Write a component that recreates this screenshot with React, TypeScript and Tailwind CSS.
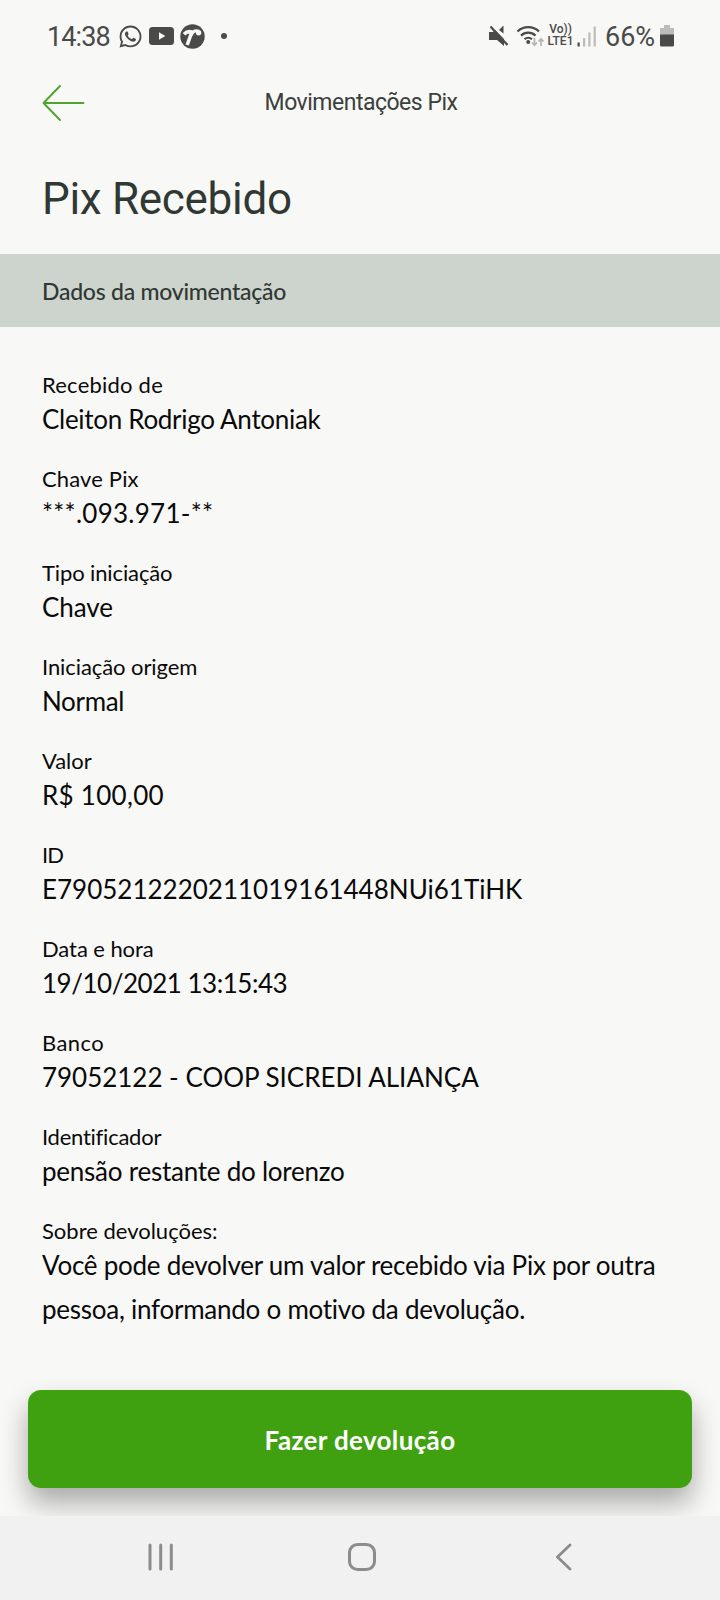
import { FaWhatsapp } from 'react-icons/fa6';

interface Field {
  label: string;
  value: string;
  labelClass?: string;
  valueClass?: string;
}

const fields: Field[] = [
  { label: 'Recebido de', value: 'Cleiton Rodrigo Antoniak', labelClass: 'tracking-[0.22px]', valueClass: 'tracking-[-0.3px]' },
  { label: 'Chave Pix', value: '***.093.971-**', labelClass: 'tracking-[0.15px]', valueClass: 'tracking-[0.26px]' },
  { label: 'Tipo iniciação', value: 'Chave', labelClass: 'tracking-[-0.12px]', valueClass: 'tracking-[-0.09px]' },
  { label: 'Iniciação origem', value: 'Normal', labelClass: 'tracking-[-0.08px]', valueClass: 'tracking-[-0.33px]' },
  { label: 'Valor', value: 'R$ 100,00', labelClass: 'tracking-[-0.05px]', valueClass: 'tracking-[0.28px]' },
  { label: 'ID', value: 'E7905212220211019161448NUi61TiHK', labelClass: 'tracking-[-1px]' },
  { label: 'Data e hora', value: '19/10/2021 13:15:43', labelClass: 'tracking-[-0.08px]', valueClass: 'tracking-[-0.48px]' },
  { label: 'Banco', value: '79052122 - COOP SICREDI ALIANÇA', labelClass: 'tracking-[0.4px]', valueClass: 'tracking-[-0.02px]' },
  { label: 'Identificador', value: 'pensão restante do lorenzo', labelClass: 'tracking-[-0.24px]', valueClass: 'tracking-[-0.24px]' },
];

function StatusBar() {
  return (
    <div className="flex h-[72px] items-center pl-[47px] pr-[46px] font-['Roboto',sans-serif] text-[#4a4a48]">
      <span className="w-[71px] pt-[2px] text-[27px] tracking-[-0.9px]">14:38</span>
      <FaWhatsapp className="size-[25px]" />
      <svg className="ml-[6px]" width="25" height="18" viewBox="0 0 25 18">
        <rect width="25" height="18" rx="3.5" fill="currentColor" />
        <path d="M10 5.2v7.6l6.3-3.8z" fill="#f8f8f6" />
      </svg>
      <svg className="ml-[6px]" width="25" height="25" viewBox="0 0 25 25" fill="none">
        <circle cx="12.5" cy="12.5" r="12.2" fill="currentColor" />
        <path d="M4 10.2Q7.5 6.6 11.8 8L7.2 21" stroke="#f8f8f6" strokeWidth="3.6" strokeLinejoin="round" />
        <path d="M11 11.5Q13.5 5.2 19 7.2" stroke="#f8f8f6" strokeWidth="3" />
        <circle cx="18.6" cy="8.8" r="2.7" fill="#f8f8f6" />
      </svg>
      <span className="ml-[16px] size-[6px] rounded-full bg-[#4a4a48]" />

      <svg className="ml-auto" width="20" height="22" viewBox="0 0 20 22">
        <path d="M0 7h4l2-2 9 9v7l-7-6H0z" fill="currentColor" />
        <path d="M14.5.5v8L10 5z" fill="currentColor" />
        <path d="M1.5 1.5l17 18.5" stroke="currentColor" strokeWidth="2.2" />
      </svg>
      <svg className="ml-[7px]" width="29" height="22" viewBox="0 0 29 22" fill="none">
        <path d="M1.5 6.5a15.5 15.5 0 0 1 21.5 0M5 10.6a10.5 10.5 0 0 1 14.5 0M8.5 14.2a5.6 5.6 0 0 1 7.5 0" stroke="currentColor" strokeWidth="2.2" />
        <circle cx="12.2" cy="17" r="2" fill="currentColor" />
        <path d="M18.5 13v7M16 17.5l2.5 2.8 2.5-2.8M25 21v-7M22.5 16.5l2.5-2.8 2.5 2.8" stroke="#b5b5b3" strokeWidth="1.7" />
      </svg>
      <div className="ml-[2px] flex w-[27px] flex-col items-center text-[12px] font-medium leading-[12px]">
        <span className="leading-[11px]">Vo))</span>
        <span className="leading-[13px]">LTE1</span>
      </div>
      <svg className="ml-[3px]" width="20" height="21" viewBox="0 0 20 21">
        <rect x="0.5" y="16.5" width="2.2" height="4" fill="currentColor" />
        <rect x="6" y="12" width="2.2" height="8.5" fill="#bcbcba" />
        <rect x="11.3" y="6.5" width="2.2" height="14" fill="#bcbcba" />
        <rect x="16.6" y="0.5" width="2.2" height="20" fill="#bcbcba" />
      </svg>
      <span className="ml-[8px] w-[52px] whitespace-nowrap pt-[2px] text-[27px]">66%</span>
      <svg className="ml-[3px]" width="14" height="22" viewBox="0 0 14 22">
        <path d="M4 0h6v3h4v7H0V3h4z" fill="#bcbcba" />
        <path d="M0 9.5h14V20a1.5 1.5 0 0 1-1.5 1.5h-11A1.5 1.5 0 0 1 0 20z" fill="currentColor" />
      </svg>
    </div>
  );
}

function Header() {
  return (
    <header className="grid h-[62px] grid-cols-[1fr_auto_1fr] items-center pl-[42px] pr-10">
      <svg width="44" height="38" viewBox="0 0 44 38" fill="none" stroke="#4fa430" strokeWidth="1.9" strokeLinecap="round" strokeLinejoin="round">
        <path d="M18 2L1.5 19 18 36M1.5 19H41.5" />
      </svg>
      <span className="font-['Roboto',sans-serif] text-[23px] tracking-[-0.5px] text-[#3a413c]">Movimentações Pix</span>
    </header>
  );
}

function FieldRow({ label, value, labelClass = '', valueClass = '' }: Field) {
  return (
    <div>
      <dt className={`text-[22px] leading-6 ${labelClass}`}>{label}</dt>
      <dd className={`text-[26px] leading-[44px] ${valueClass}`}>{value}</dd>
    </div>
  );
}

function NavBar() {
  return (
    <nav className="relative flex h-[84px] items-center bg-[#f1f1f1] pb-[2px] pl-[148px] pr-[147px]">
      <svg width="26" height="28" viewBox="0 0 26 28" stroke="#8c8c8c" strokeWidth="3" strokeLinecap="round">
        <path d="M2 2v24M12.7 2v24M23.3 2v24" />
      </svg>
      <svg className="ml-[174px]" width="28" height="28" viewBox="0 0 28 28" fill="none" stroke="#8c8c8c" strokeWidth="3">
        <rect x="1.5" y="1.5" width="25" height="25" rx="8" />
      </svg>
      <svg className="ml-auto" width="17" height="28" viewBox="0 0 17 28" fill="none" stroke="#8c8c8c" strokeWidth="2.8" strokeLinecap="round">
        <path d="M14 2L1.5 14 14 26" />
      </svg>
    </nav>
  );
}

export default function App() {
  return (
    <div className="flex h-[1600px] w-[720px] flex-col overflow-hidden bg-[#f8f8f6] font-['Lato',sans-serif] text-[#0a0a0a]">
      <StatusBar />
      <Header />
      <h1 className="h-[120px] pl-[42px] pt-[39px] font-['Roboto',sans-serif] text-[44px] leading-[52px] tracking-[-0.3px] text-[#303834]">
        Pix Recebido
      </h1>
      <h2 className="flex h-[73px] items-center bg-[#cdd4cd] pl-[42px] pt-px text-[23px] font-medium tracking-[-0.25px] text-[#303834]">
        Dados da movimentação
      </h2>

      <main className="flex-1 px-[42px] pt-[46px]">
        <dl className="flex flex-col gap-[26px]">
          {fields.map(field => (
            <FieldRow key={field.label} {...field} />
          ))}
          <div>
            <dt className="text-[22px] leading-6">Sobre devoluções:</dt>
            <dd className="whitespace-nowrap text-[26px] leading-[44px] tracking-[-0.25px]">
              Você pode devolver um valor recebido via Pix por outra
              <br />
              pessoa, informando o motivo da devolução.
            </dd>
          </div>
        </dl>
      </main>

      <div className="px-7 pb-7">
        <button className="h-[98px] w-full rounded-[13px] bg-[#3fa110] pt-[2px] text-[26px] font-bold tracking-[0.35px] text-white shadow-[0_15px_28px_rgba(0,0,0,0.32)]">
          Fazer devolução
        </button>
      </div>
      <NavBar />
    </div>
  );
}
